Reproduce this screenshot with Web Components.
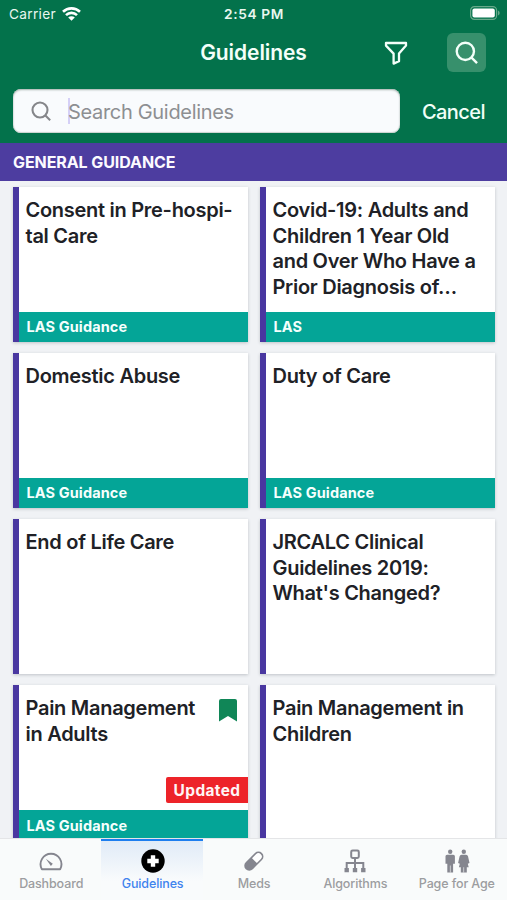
<!DOCTYPE html>
<html lang="en">
<head>
<meta charset="utf-8">
<title>Guidelines</title>
<style>
html,body{margin:0;height:100%;overflow:hidden}
body{font-family:Inter,"Liberation Sans",sans-serif}
</style>
</head>
<body>
<guidelines-app></guidelines-app>
<script>
const define = (name, html, setup) => {
  const template = document.createElement('template');
  template.innerHTML = '<style>*{box-sizing:border-box}svg{display:block}</style>' + html;
  customElements.define(name, class extends HTMLElement {
    connectedCallback() {
      if (this.shadowRoot) return;
      const root = this.attachShadow({mode: 'open'});
      root.append(template.content.cloneNode(true));
      if (setup) setup(this, root);
    }
  });
};

const icons = {
  search: '<svg viewBox="0 0 24 24" width="100%" height="100%" fill="none" stroke="currentColor" stroke-width="2.5"><circle cx="10.8" cy="10.8" r="9"/><path d="M17 17l6 6"/></svg>',
  filter: '<svg viewBox="0 0 24 24" width="100%" height="100%" fill="none" stroke="currentColor" stroke-width="2.3" stroke-linejoin="round"><path d="M2 2H22V4.6L15 12.6V20.2L9.6 22.6V12.6L2 4.6Z"/></svg>',
  dashboard: '<svg viewBox="0 0 24 24" width="24" height="24" fill="none" stroke="currentColor" stroke-width="1.9"><path d="M2.9 20.2A10.4 10.4 0 1 1 21.1 20.2Z" stroke-linejoin="round"/><path d="M6.8 9.7L13.8 14.7L11.9 17.1Z" fill="currentColor" stroke="none"/></svg>',
  guidelines: '<svg viewBox="0 0 24 24" width="24" height="24"><circle cx="12" cy="12" r="11.7" fill="#000"/><path d="M9.8 6.3h4.4v3.5h3.5v4.4h-3.5v3.5H9.8v-3.5H6.3V9.8h3.5z" fill="#fff"/></svg>',
  meds: '<svg viewBox="0 0 24 24" width="24" height="24"><g transform="rotate(-45 12 12)"><rect x="0.3" y="7" width="23" height="10" rx="5" fill="currentColor"/><path d="M12.6 8.6h5.6a3.4 3.4 0 0 1 0 6.8h-5.6z" fill="#fff"/></g></svg>',
  algorithms: '<svg viewBox="0 0 24 24" width="24" height="24" fill="none" stroke="currentColor" stroke-width="2"><rect x="8.2" y="1.5" width="7.6" height="7.4" rx="1.4"/><path d="M12 9v11M3.7 20v-6h16.6v6"/><path d="M1.5 19h4.4v4.3H1.5zM9.8 19h4.4v4.3H9.8zM18.1 19h4.4v4.3h-4.4z" fill="currentColor" stroke="none"/></svg>',
  people: '<svg viewBox="0 0 26 24" width="26" height="24" fill="currentColor"><circle cx="6.2" cy="2.8" r="2.2"/><path d="M3.1 5.7h6.2q1.6 0 1.6 1.6v7.5H9.1v8.6H3.3v-8.6H1.5V7.3Q1.5 5.7 3.1 5.7z"/><path d="M5.9 16.5h.6v6.9h-.6z" fill="#f9fbfb"/><circle cx="19.8" cy="2.8" r="2.2"/><path d="M17.5 5.7h4.6q1.5 0 1.9 1.5l1.5 6.7-1.7.9.9 3.4h-1.9v5.2h-6v-5.2h-1.9l.9-3.4-1.7-.9 1.5-6.7q.4-1.5 1.9-1.5z"/><path d="M19.5 18.3h.6v5.1h-.6z" fill="#f9fbfb"/></svg>'
};

define('app-icon', '<style>:host{display:block;flex:none;line-height:0}</style>', (host, root) => {
  root.innerHTML += icons[host.getAttribute('name')];
});

define('status-bar', `<style>
:host{display:grid;grid-template-columns:1fr auto 1fr;align-items:center;height:28px;padding:0 7px 0 9px;color:#e9f7ef;font-size:13.7px;letter-spacing:.3px}
.left{display:flex;align-items:center;gap:6px}
.time{font-weight:600;letter-spacing:.65px;margin-left:-1px}
.battery{justify-self:end;margin-top:-2px}
</style>
<div class="left"><span>Carrier</span><svg width="19" height="14" viewBox="0 0 19 14" fill="none" stroke="#fff" stroke-width="2.6"><path d="M1 4.8a12.2 12.2 0 0 1 17 0M4 8.1a7.8 7.8 0 0 1 11 0"/><path d="M9.5 13.8L6.2 10.5a4.7 4.7 0 0 1 6.6 0z" fill="#fff" stroke="none"/></svg></div>
<span class="time">2:54 PM</span>
<svg class="battery" width="30" height="14" viewBox="0 0 30 14"><rect x=".6" y=".6" width="26" height="12.8" rx="3.8" fill="none" stroke="#68a98a" stroke-width="1.2"/><rect x="2.4" y="2.4" width="22.4" height="9.2" rx="2" fill="#fff"/><path d="M28 4.5q1.7.7 1.7 2.5T28 9.5z" fill="#68a98a"/></svg>`);

define('title-bar', `<style>
:host{display:grid;grid-template-columns:1fr auto 1fr;align-items:center;height:49px;padding:0 21px;color:#f4fff9}
h1{grid-column:2;margin:0;font-size:21px;font-weight:600;letter-spacing:-.08px}
.tools{display:flex;align-items:center;justify-content:flex-end;gap:39px}
.filter{width:24px;height:24px}
.find{display:grid;place-items:center;width:39px;height:39px;border-radius:6px;background:#37906c}
.find app-icon{width:23px;height:23px}
</style><h1>Guidelines</h1><div class="tools"><app-icon class="filter" name="filter"></app-icon><div class="find"><app-icon name="search"></app-icon></div></div>`);

define('search-bar', `<style>
:host{display:flex;align-items:center;padding:12px 22px 0 13px;color:#f1fff8}
.field{display:flex;align-items:center;width:387px;height:44px;padding-left:18px;border-radius:8px;background:#f9fbfd;box-shadow:inset 0 1px 2px #a2afaa,inset 0 -1px 1px #cbd5d0}
app-icon{width:20px;height:20px;color:#85868a}
.caret{width:2px;height:26px;margin-left:17px;background:#d5d0f7}
.hint{margin-left:-2px;padding-top:1px;color:#8d8f92;font-size:20px;letter-spacing:-.32px}
.cancel{margin-left:auto;padding-top:1px;font-size:20px;font-weight:500;letter-spacing:-.55px}
</style><div class="field"><app-icon name="search"></app-icon><span class="caret"></span><span class="hint">Search Guidelines</span></div><span class="cancel">Cancel</span>`);

define('section-heading', `<style>
:host{display:flex;align-items:center;height:38px;padding-left:13px;background:#4d3da0;color:#fcfaff;font-size:16px;font-weight:700;letter-spacing:-.08px}
</style><slot></slot>`);

define('guideline-card', `<style>
:host{display:flex;flex-direction:column;position:relative;border-left:6px solid #4937a0;background:#fff;box-shadow:0 1px 3px #bfc3c8}
.title{padding:11px 7px 0 6.5px;font-size:20px;line-height:25.6px;font-weight:560;letter-spacing:-.28px;color:#202126;white-space:pre-line}
.tag{display:none;align-items:center;height:29.5px;margin-top:auto;padding-left:7.5px;background:#04a597;color:#f5fffd;font-size:14.5px;font-weight:700;letter-spacing:.12px}
:host([tag]) .tag{display:flex}
.mark,.updated{display:none;position:absolute}
:host([updated]) .mark{display:block;right:11px;top:14px}
:host([updated]) .updated{display:grid;place-items:center;right:0;top:92px;width:82px;height:26px;background:#ed2329;color:#fff5f5;border-radius:2px 0 0 2px;font-size:15.4px;font-weight:700;letter-spacing:.4px}
</style><div class="title"><slot></slot></div><svg class="mark" width="18" height="23" viewBox="0 0 18 23"><path d="M0 2Q0 0 2 0H16Q18 0 18 2V22.5L9 17L0 22.5Z" fill="#108657"/></svg><span class="updated">Updated</span><div class="tag"></div>`,
(host, root) => { root.querySelector('.tag').textContent = host.getAttribute('tag') || ''; });

define('card-grid', `<style>
:host{display:grid;grid-template-columns:235px 235px;grid-auto-rows:154.5px;gap:11.6px 12px;padding:6px 13px;flex:1;min-height:0;overflow:hidden;background:#f0f2f5}
</style><slot></slot>`);

define('nav-tab', `<style>
:host{display:flex;flex-direction:column;align-items:center;height:61px;padding:10px 0 0 1px;color:#85868f}
span{margin-top:3px;font-size:12.5px;line-height:15px;font-weight:500;color:#9c9da0;letter-spacing:-.12px;white-space:nowrap}
:host([active]){background:linear-gradient(#dfeaf7,#f9fbfc 42px);box-shadow:inset 0 2px #1d7eef}
:host([active]) span{color:#3f83ee}
</style><app-icon></app-icon><span><slot></slot></span>`,
(host, root) => root.querySelector('app-icon').replaceWith(Object.assign(document.createElement('div'), {innerHTML: icons[host.getAttribute('icon')]})));

define('tab-bar', `<style>
:host{display:grid;grid-template-columns:repeat(5,1fr);height:61px;flex:none;background:#f9fbfb;box-shadow:0 -1px #e4e5e7}
</style><slot></slot>`);

define('guidelines-app', `<style>
:host{display:flex;flex-direction:column;width:507px;height:900px;overflow:hidden;background:#f0f2f5}
header{height:143px;flex:none;background:#03724b}
section-heading{flex:none}
tab-bar{position:relative}
</style>
<header><status-bar></status-bar><title-bar></title-bar><search-bar></search-bar></header>
<section-heading>GENERAL GUIDANCE</section-heading>
<card-grid>
<guideline-card tag="LAS Guidance">Consent in Pre-hospi-
tal Care</guideline-card>
<guideline-card tag="LAS">Covid-19: Adults and
Children 1 Year Old
and Over Who Have a
Prior Diagnosis of…</guideline-card>
<guideline-card tag="LAS Guidance">Domestic Abuse</guideline-card>
<guideline-card tag="LAS Guidance">Duty of Care</guideline-card>
<guideline-card>End of Life Care</guideline-card>
<guideline-card>JRCALC Clinical
Guidelines 2019:
What's Changed?</guideline-card>
<guideline-card tag="LAS Guidance" updated>Pain Management
in Adults</guideline-card>
<guideline-card>Pain Management in
Children</guideline-card>
</card-grid>
<tab-bar><nav-tab icon="dashboard">Dashboard</nav-tab><nav-tab icon="guidelines" active>Guidelines</nav-tab><nav-tab icon="meds">Meds</nav-tab><nav-tab icon="algorithms">Algorithms</nav-tab><nav-tab icon="people">Page for Age</nav-tab></tab-bar>`);
</script>
</body>
</html>
